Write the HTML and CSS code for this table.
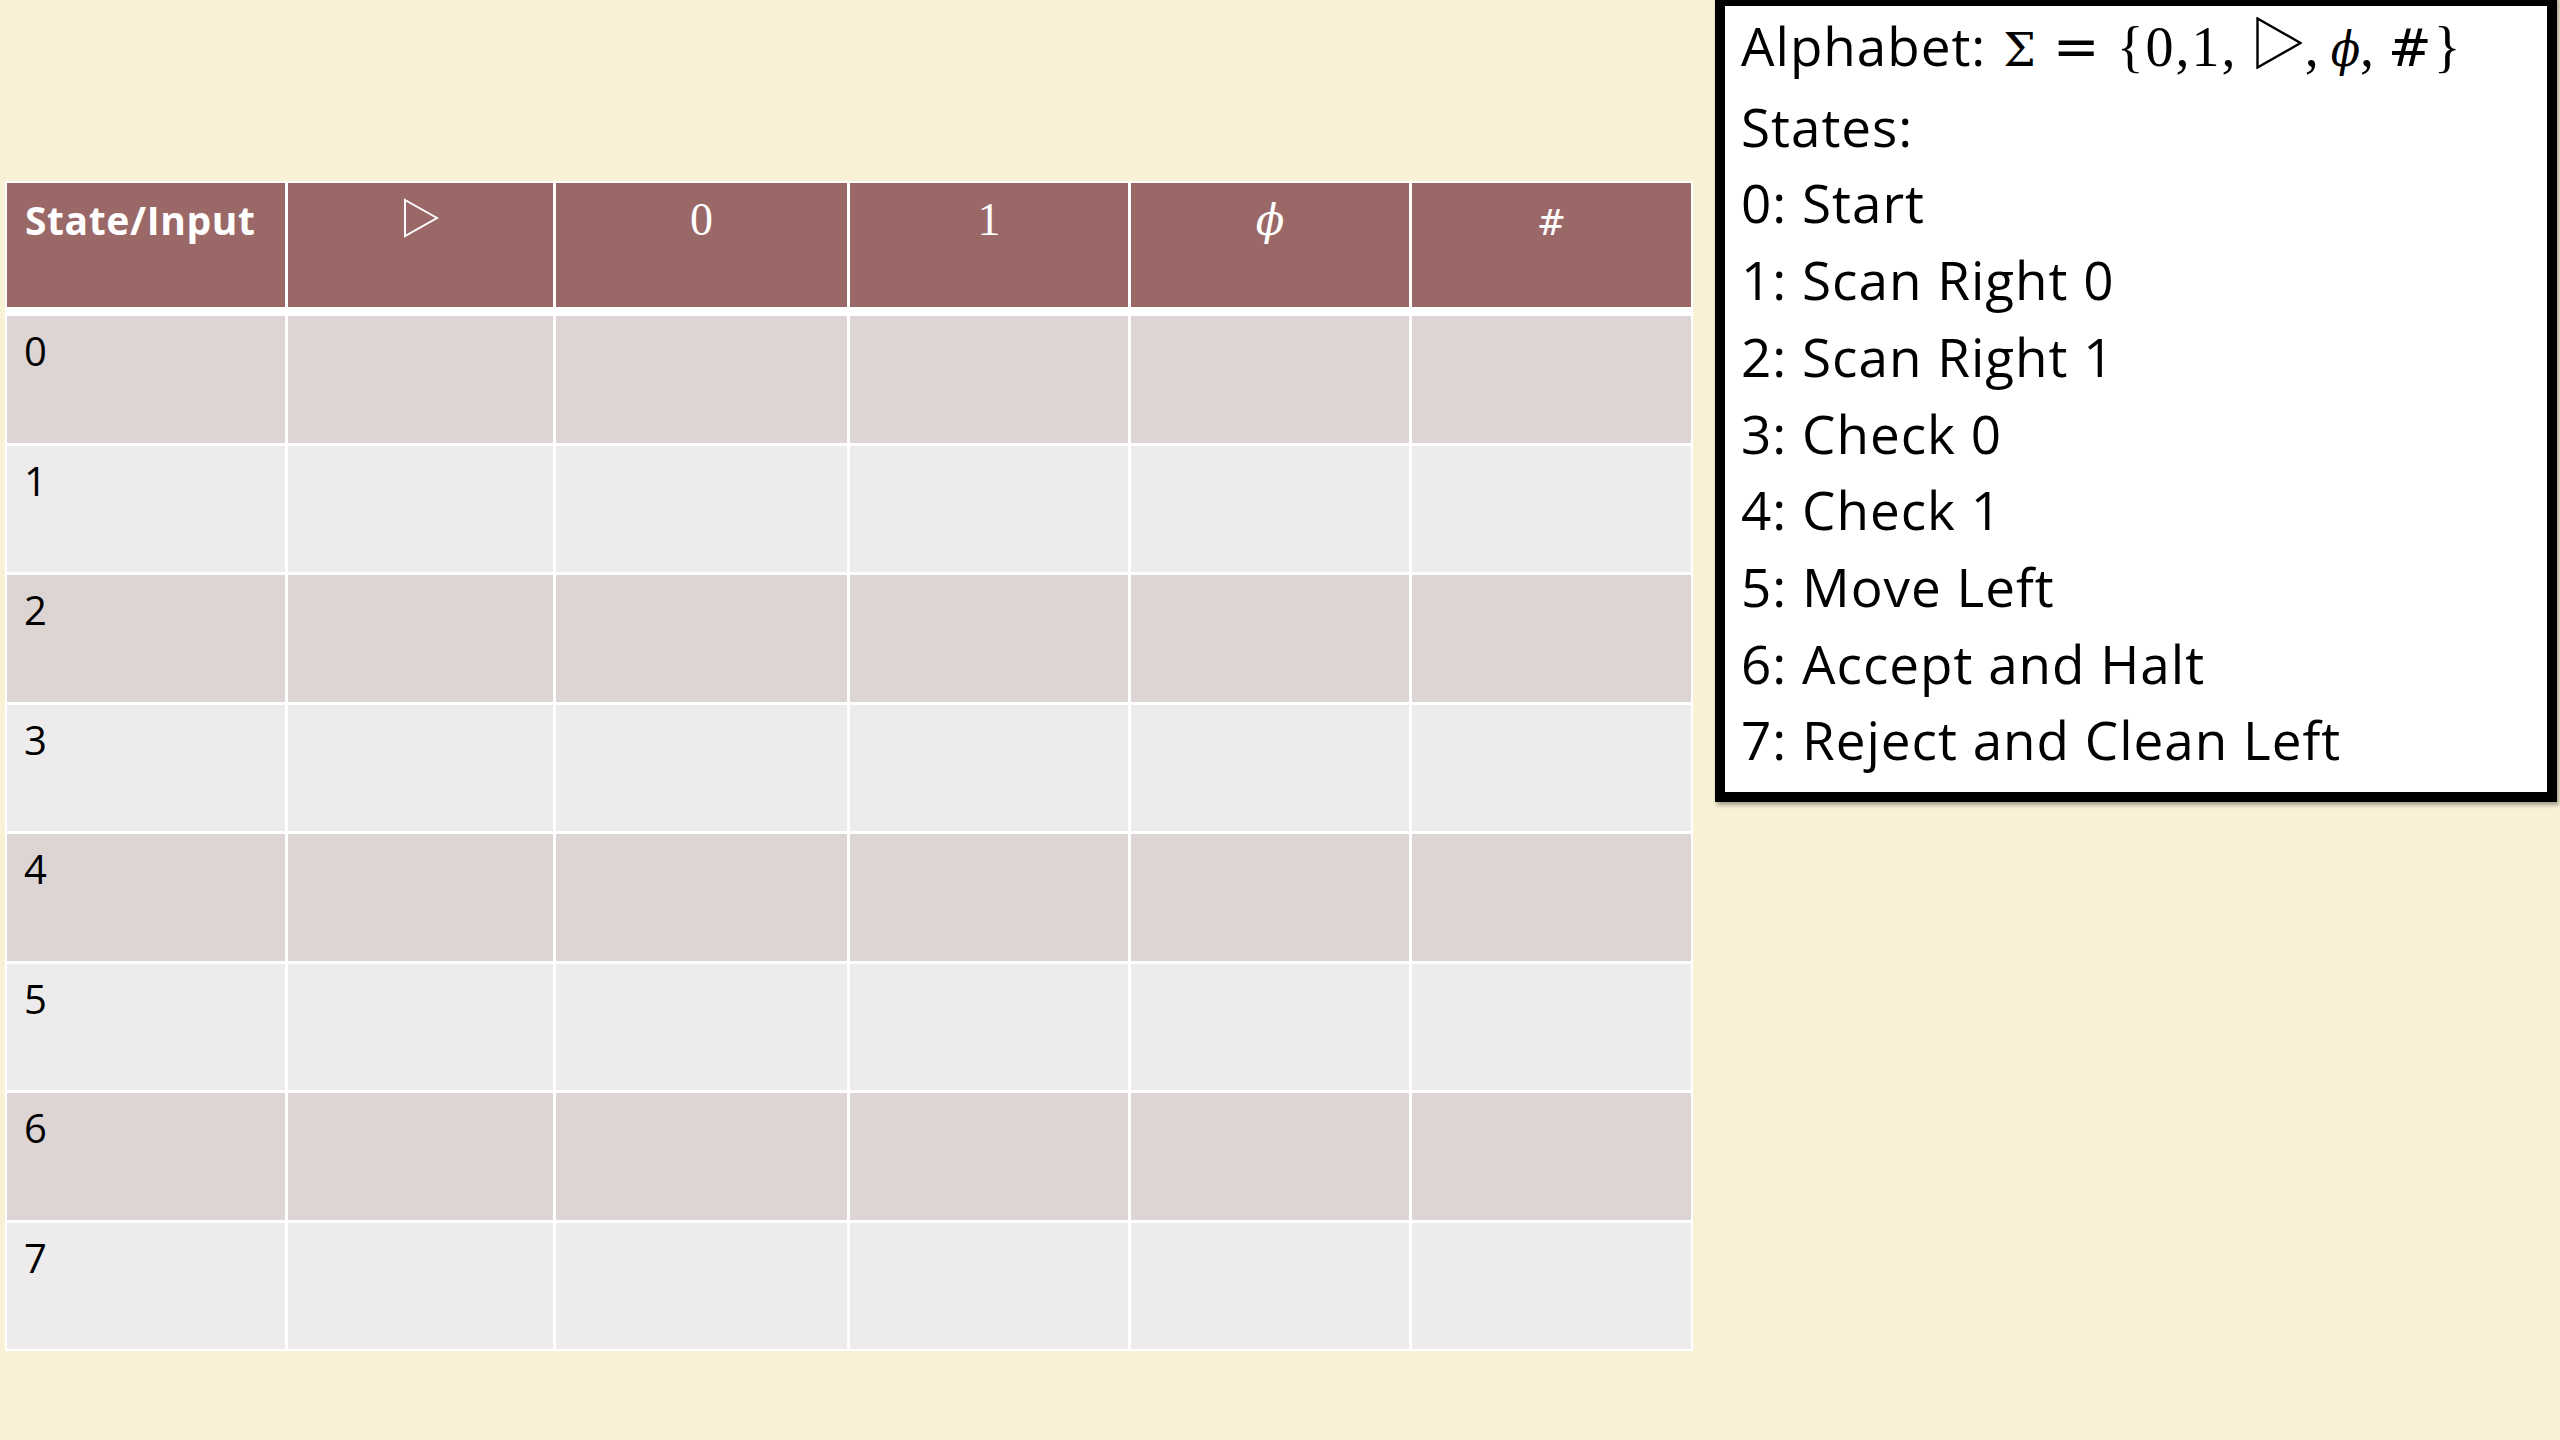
FILE: index.html
```html
<!DOCTYPE html>
<html lang="en">
<head>
<meta charset="utf-8">
<title>Turing machine transition table</title>
<link rel="stylesheet" href="styles.css">
</head>
<body>
<div class="slide">
  <div class="ttable">
    <div class="th th-first">State/Input</div>
    <div class="th"><svg class="tri-h" width="36" height="40" viewBox="0 0 36 40"><polygon points="2,2 34,20 2,38" fill="none" stroke="#fff" stroke-width="2" stroke-linejoin="miter"/></svg></div>
    <div class="th"><span class="m">0</span></div>
    <div class="th"><span class="m">1</span></div>
    <div class="th"><span class="phi">ϕ</span></div>
    <div class="th"><span class="hash">#</span></div>

    <div class="td dark">0</div><div class="td dark"></div><div class="td dark"></div><div class="td dark"></div><div class="td dark"></div><div class="td dark"></div>
    <div class="td light">1</div><div class="td light"></div><div class="td light"></div><div class="td light"></div><div class="td light"></div><div class="td light"></div>
    <div class="td dark">2</div><div class="td dark"></div><div class="td dark"></div><div class="td dark"></div><div class="td dark"></div><div class="td dark"></div>
    <div class="td light">3</div><div class="td light"></div><div class="td light"></div><div class="td light"></div><div class="td light"></div><div class="td light"></div>
    <div class="td dark">4</div><div class="td dark"></div><div class="td dark"></div><div class="td dark"></div><div class="td dark"></div><div class="td dark"></div>
    <div class="td light">5</div><div class="td light"></div><div class="td light"></div><div class="td light"></div><div class="td light"></div><div class="td light"></div>
    <div class="td dark">6</div><div class="td dark"></div><div class="td dark"></div><div class="td dark"></div><div class="td dark"></div><div class="td dark"></div>
    <div class="td light">7</div><div class="td light"></div><div class="td light"></div><div class="td light"></div><div class="td light"></div><div class="td light"></div>
  </div>

  <div class="legend">
    <div class="line">Alphabet:<span class="math"><span class="sigma">Σ</span><span class="eq">=</span><span class="set">{0,1,</span><svg class="tri-l" width="46" height="52" viewBox="0 0 46 52"><polygon points="1.5,1.5 44.5,26 1.5,50.5" fill="none" stroke="#000" stroke-width="2.4"/></svg><span class="cm c1">,</span><span class="phi-l">ϕ</span><span class="cm">,</span><span class="hash-l">#</span><span class="close">}</span></span></div>
    <div class="line">States:</div>
    <div class="line">0: Start</div>
    <div class="line">1: Scan Right 0</div>
    <div class="line">2: Scan Right 1</div>
    <div class="line">3: Check 0</div>
    <div class="line">4: Check 1</div>
    <div class="line">5: Move Left</div>
    <div class="line">6: Accept and Halt</div>
    <div class="line">7: Reject and Clean Left</div>
  </div>
</div>
</body>
</html>
```

FILE: styles.css
```css
html, body {
  margin: 0;
  padding: 0;
}

body {
  width: 2560px;
  height: 1440px;
  overflow: hidden;
  background: #f8f1d6;
  font-family: "Open Sans", "Lato", sans-serif;
}

.slide {
  display: flex;
  align-items: flex-start;
  width: 2560px;
  height: 1440px;
}

/* ---------- transition table ---------- */
.ttable {
  margin-left: 5px;
  margin-top: 181px;
  display: grid;
  grid-template-columns: 278px 265px 291px 278px 278px 279px;
  grid-template-rows: 130px repeat(8, 126.5px);
  gap: 3px;
  padding: 2px;
  background: #ffffff;
}

.th {
  background: #9b6868;
  color: #ffffff;
  margin-bottom: 6px;
  padding-top: 10px;
  line-height: 53px;
  text-align: center;
  font-family: "Liberation Serif", serif;
  font-size: 46px;
}

.th-first {
  text-align: left;
  padding-left: 18px;
  font-family: "Open Sans", sans-serif;
  font-weight: 700;
  font-size: 39px;
  letter-spacing: 0.6px;
}

.th .m {
  font-family: "Liberation Serif", serif;
  font-size: 46px;
}

.th .hash {
  font-family: "DejaVu Serif", serif;
  font-size: 35px;
}

.th .phi {
  font-family: "DejaVu Serif", serif;
  font-style: italic;
  font-size: 42px;
}

.tri-h {
  vertical-align: -3px;
}

.td {
  padding: 8px 0 0 17px;
  font-family: "Open Sans", sans-serif;
  font-size: 40px;
  line-height: 54px;
  color: #000000;
}

.td.dark {
  background: #ddd4d4;
}

.td.light {
  background: #edebeb;
}

/* ---------- legend box ---------- */
.legend {
  box-sizing: border-box;
  margin-left: 22px;
  margin-top: -4px;
  width: 842px;
  height: 806px;
  border: 10px solid #000000;
  background: #ffffff;
  padding: 2px 0 0 16px;
  box-shadow: 2px 3px 4px rgba(0, 0, 0, 0.35);
}

.line {
  font-family: "Open Sans", sans-serif;
  font-size: 53px;
  letter-spacing: 1px;
  line-height: 76.7px;
  color: #000000;
  white-space: nowrap;
}

.math {
  font-family: "Liberation Serif", serif;
  font-size: 56px;
  letter-spacing: 0;
}

.math .sigma {
  font-family: "DejaVu Serif", serif;
  font-size: 46px;
  margin-left: 17px;
}

.math .eq {
  font-family: "DejaVu Serif", serif;
  margin-left: 17px;
}

.math .set {
  margin-left: 17px;
  letter-spacing: 2px;
}

.tri-l {
  vertical-align: -3px;
  margin-left: 18px;
}

.math .cm {
  margin-left: 0;
}

.math .c1 {
  margin-left: 3px;
}

.math .phi-l {
  font-family: "DejaVu Serif Condensed", "DejaVu Serif", serif;
  font-style: italic;
  font-size: 48px;
  margin-left: 12px;
}

.math .hash-l {
  font-family: "DejaVu Serif", serif;
  font-size: 52px;
  margin-left: 14px;
}

.math .close {
  margin-left: 2px;
}
```
